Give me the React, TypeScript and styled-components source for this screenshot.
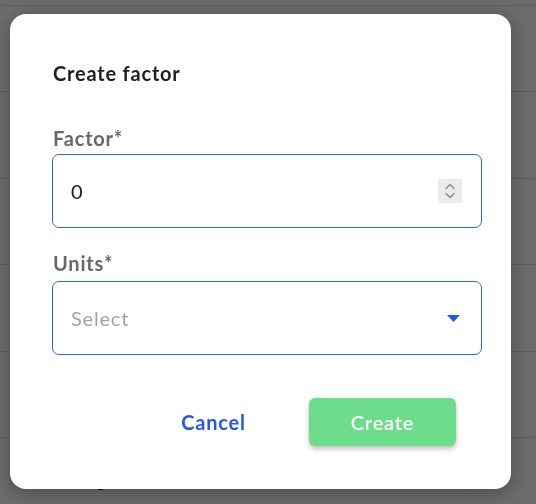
import React from "react";
import styled, { createGlobalStyle } from "styled-components";

const Global = createGlobalStyle`
  html, body { margin: 0; padding: 0; background: #fff; }
  body { font-family: "Lato", "Noto Sans", sans-serif; overflow: hidden; }
  * { box-sizing: border-box; }
`;

const Page = styled.div`
  width: 536px;
  height: 504px;
  padding-top: 5px;
  overflow: hidden;
`;

const Row = styled.div`
  height: 86.4px;
  border-top: 1px solid #dedede;
  display: flex;
  align-items: flex-end;
  justify-content: space-between;
  padding: 0 50px 33px 60px;
  font-size: 16px;
  color: #000;
`;

const Overlay = styled.div`
  position: fixed;
  inset: 0;
  background: rgba(0, 0, 0, 0.58);
  padding: 14px 0 0 10px;
`;

const Modal = styled.div`
  width: 501px;
  height: 475px;
  background: #fff;
  border-radius: 16px;
  box-shadow: 0 4px 18px rgba(0, 0, 0, 0.3);
  padding: 47px 29px 0 42px;
  display: flex;
  flex-direction: column;
`;

const Title = styled.h2`
  margin: 0 0 0 1px;
  font-size: 20px;
  line-height: 24px;
  font-weight: 700;
  letter-spacing: 0.8px;
  color: #1f1f1f;
`;

const Label = styled.label<{ $top: number; $bottom: number }>`
  display: block;
  margin: ${(p) => p.$top}px 0 ${(p) => p.$bottom}px 1px;
  font-size: 20px;
  line-height: 24px;
  font-weight: 700;
  letter-spacing: 0.8px;
  color: #676767;
`;

const Field = styled.div`
  height: 74px;
  border: 1px solid #2f62f6;
  border-radius: 7px;
  display: flex;
  align-items: center;
  justify-content: space-between;
  padding: 0 19px 0 18px;
`;

const Value = styled.span<{ $placeholder?: boolean }>`
  font-size: 20px;
  letter-spacing: ${(p) => (p.$placeholder ? "0.8px" : "0")};
  color: ${(p) => (p.$placeholder ? "#a3a3a3" : "#1c1c1c")};
`;

const Spinner = styled.div`
  width: 24px;
  height: 24px;
  background: #ebebeb;
  display: flex;
  align-items: center;
  justify-content: center;
`;

const Caret = styled.div`
  margin-right: 2px;
  display: flex;
`;

const Footer = styled.div`
  margin-top: 43px;
  display: flex;
  justify-content: flex-end;
  gap: 22px;
  padding-right: 26px;
`;

const Button = styled.button<{ $primary?: boolean }>`
  width: 147px;
  height: 48px;
  border: none;
  border-radius: 6px;
  font-family: "Lato", "Noto Sans", sans-serif;
  font-size: 20px;
  letter-spacing: 0.8px;
  font-weight: ${(p) => (p.$primary ? 600 : 700)};
  color: ${(p) => (p.$primary ? "#ffffff" : "#2356f5")};
  background: ${(p) => (p.$primary ? "#6ddd8b" : "transparent")};
  box-shadow: ${(p) => (p.$primary ? "0 3px 5px rgba(0,0,0,0.25)" : "none")};
  cursor: pointer;
`;

export default function App() {
  return (
    <>
      <Global />
      <Page>
        <Row />
        <Row />
        <Row />
        <Row />
        <Row />
        <Row>
          <span>Rating</span>
          <span>(%)</span>
        </Row>
      </Page>
      <Overlay>
        <Modal>
          <Title>Create factor</Title>
          <Label $top={41} $bottom={4}>Factor*</Label>
          <Field>
            <Value>0</Value>
            <Spinner>
              <svg width="12" height="18" viewBox="0 0 12 18" fill="none">
                <path d="M2 6.5 L6 2.5 L10 6.5" stroke="#8a8a8a" strokeWidth="1.4" strokeLinecap="round" strokeLinejoin="round" />
                <path d="M2 11.5 L6 15.5 L10 11.5" stroke="#8a8a8a" strokeWidth="1.4" strokeLinecap="round" strokeLinejoin="round" />
              </svg>
            </Spinner>
          </Field>
          <Label $top={23} $bottom={6}>Units*</Label>
          <Field>
            <Value $placeholder>Select</Value>
            <Caret>
              <svg width="13" height="7" viewBox="0 0 13 7">
                <path d="M0 0 H13 L6.5 7 Z" fill="#2356f5" />
              </svg>
            </Caret>
          </Field>
          <Footer>
            <Button>Cancel</Button>
            <Button $primary>Create</Button>
          </Footer>
        </Modal>
      </Overlay>
    </>
  );
}
